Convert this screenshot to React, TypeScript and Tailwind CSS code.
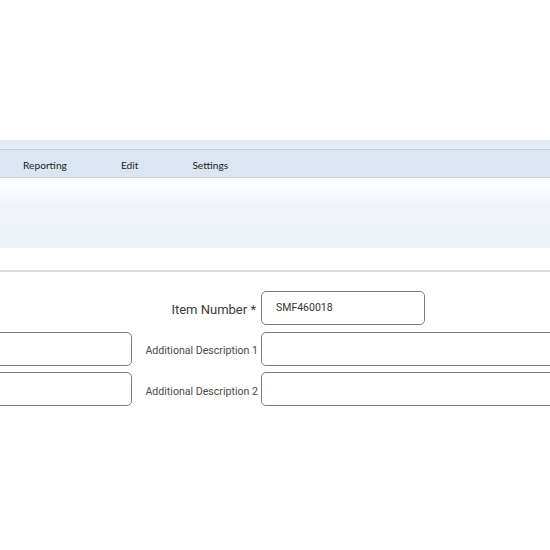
const menu = ["Reporting", "Edit", "Settings"];

function Field({ value, className }: { value?: string; className: string }) {
  return (
    <div
      className={
        "h-[34px] rounded-[5px] border border-[#7d7d7d] bg-white flex items-center pl-[14px] text-[10.5px] text-[#333] " +
        className
      }
    >
      {value}
    </div>
  );
}

export default function App() {
  return (
    <div className="w-[550px] h-[550px] bg-white overflow-hidden font-['Roboto',sans-serif]">
      <div className="h-[140px]" />
      <div className="h-[9px] bg-[#e3ebf5]" />
      <div className="h-px bg-[#c3ccd8]" />
      <div className="h-[27px] bg-[#dce6f2] flex items-center pt-[4px] font-['Lato',sans-serif] text-[10.2px] text-[#222]">
        <span className="ml-[23px]">{menu[0]}</span>
        <span className="ml-[54px]">{menu[1]}</span>
        <span className="ml-[54px]">{menu[2]}</span>
      </div>
      <div className="h-px bg-[#c5cfdb]" />
      <div className="h-[70px] bg-gradient-to-b from-white via-[#f0f4fa] via-40% to-[#edf2f9]" />
      <div className="h-[22px]" />
      <div className="h-[2px] bg-[#d7dce2]" />
      <div className="pt-[19px] overflow-hidden">
        <div className="ml-[-68px] grid grid-cols-[200px_129px_300px] gap-y-[6.5px] text-[#4a4a4a]">
          <div />
          <div className="flex items-center justify-end pt-[3px] pr-[5px] text-[13px] text-[#3a3a3a]">
            Item Number *
          </div>
          <Field value="SMF460018" className="w-[164px]" />

          <Field className="" />
          <div className="flex items-center justify-end pt-[5px] pr-[3px] text-[10.6px]">
            Additional Description 1
          </div>
          <Field className="" />

          <Field className="" />
          <div className="flex items-center justify-end pt-[5px] pr-[3px] text-[10.6px]">
            Additional Description 2
          </div>
          <Field className="" />
        </div>
      </div>
    </div>
  );
}
